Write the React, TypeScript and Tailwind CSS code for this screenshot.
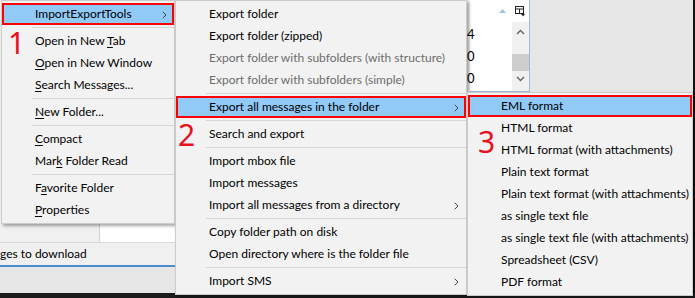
import type { ReactNode } from "react";

type Row = {
  label?: ReactNode;
  sub?: boolean;
  disabled?: boolean;
  sep?: boolean;
  hl?: boolean;
};

const Chevron = () => (
  <svg width="5" height="8" viewBox="0 0 5 8" className="absolute right-[7px] top-[8px]">
    <path d="M0.8 0.8 L4 4 L0.8 7.2" fill="none" stroke="#444" strokeWidth="1" />
  </svg>
);

const Menu = ({ rows, className, num, numClass }: { rows: Row[]; className: string; num: string; numClass: string }) => (
  <div className={`absolute bg-[#f2f2f2] border border-[#cccccc] py-[2px] shadow-[2px_2px_3px_rgba(0,0,0,0.35)] ${className}`}>
    {rows.map((r, i) =>
      r.sep ? (
        <div key={i} className="h-[5px] flex items-center pl-[30px]">
          <div className="h-px w-full bg-[#d7d7d7]" />
        </div>
      ) : (
        <div
          key={i}
          className={`relative h-[22px] flex items-center pl-[33px] whitespace-nowrap ${r.hl ? "bg-[#91c9f7] outline-2 outline-[#ff0000] -outline-offset-2" : ""} ${r.disabled ? "text-[#6d6d6d]" : "text-black"}`}
        >
          {r.label}
          {r.sub && <Chevron />}
        </div>
      )
    )}
    <div className={`absolute text-[#e8101c] text-[30px] leading-none font-['Noto_Sans',sans-serif] ${numClass}`}>{num}</div>
  </div>
);

const U = ({ children }: { children: ReactNode }) => <span className="underline underline-offset-2">{children}</span>;

export default function App() {
  const menu1: Row[] = [
    { label: "ImportExportTools", sub: true, hl: true },
    { sep: true },
    { label: <span>Open in New <U>T</U>ab</span> },
    { label: <span><U>O</U>pen in New Window</span> },
    { label: <span><U>S</U>earch Messages...</span> },
    { sep: true },
    { label: <span><U>N</U>ew Folder...</span> },
    { sep: true },
    { label: <span><U>C</U>ompact</span> },
    { label: <span>Mar<U>k</U> Folder Read</span> },
    { sep: true },
    { label: <span>F<U>a</U>vorite Folder</span> },
    { label: <span><U>P</U>roperties</span> },
  ];
  const menu2: Row[] = [
    { label: "Export folder" },
    { label: "Export folder (zipped)" },
    { label: "Export folder with subfolders (with structure)", disabled: true },
    { label: "Export folder with subfolders (simple)", disabled: true },
    { sep: true },
    { label: "Export all messages in the folder", sub: true, hl: true },
    { sep: true },
    { label: "Search and export" },
    { sep: true },
    { label: "Import mbox file" },
    { label: "Import messages" },
    { label: "Import all messages from a directory", sub: true },
    { sep: true },
    { label: "Copy folder path on disk" },
    { label: "Open directory where is the folder file" },
    { sep: true },
    { label: "Import SMS", sub: true },
  ];
  const menu3: Row[] = [
    { label: "EML format", hl: true },
    { label: "HTML format" },
    { label: "HTML format (with attachments)" },
    { label: "Plain text format" },
    { label: "Plain text format (with attachments)" },
    { label: "as single text file" },
    { label: "as single text file (with attachments)" },
    { label: "Spreadsheet (CSV)" },
    { label: "PDF format" },
  ];

  return (
    <div className="relative w-[695px] h-[298px] overflow-hidden bg-[#e6e6e6] text-[12px] font-['Lato',sans-serif]">
      {/* app behind the menus */}
      <div className="flex flex-col h-full">
        <div className="flex h-[293px]">
          <div className="w-[470px] flex flex-col">
            <div className="h-[222px] bg-[#f0f0f0]" />
            <div className="h-[21px] flex border-b border-[#d9d9d9]">
              <div className="w-[100px] bg-[#f0f0f0] border-r border-[#c9d3de]" />
              <div className="flex-1 bg-white" />
            </div>
            <div className="h-[22px] bg-[#f0f0f0] flex items-center whitespace-nowrap">ges to download</div>
            <div className="flex-1 bg-[#e6e6e6] border-t-2 border-[#4a8ccc]" />
          </div>
          <div className="w-[60px] h-[92px] bg-white border-r border-b border-[#9fb9d6] flex">
            <div className="flex-1 flex flex-col">
              <div className="h-[22px] flex items-center justify-end pr-[6px]">
                <svg width="7" height="4" viewBox="0 0 7 4"><path d="M0 4 L3.5 0 L7 4 Z" fill="#9cc3e2" /></svg>
              </div>
              <div className="flex flex-col text-[13px] leading-[22px] -ml-[3px] pt-[1px]">
                <span>4</span>
                <span>0</span>
                <span>0</span>
              </div>
            </div>
            <div className="w-[17px] flex flex-col">
              <div className="h-[22px] flex items-center justify-center">
                <svg width="11" height="11" viewBox="0 0 11 11">
                  <rect x="0.5" y="0.5" width="8" height="7" fill="none" stroke="#222" />
                  <path d="M0.5 3 H8.5 M4.5 3 V7.5" stroke="#222" />
                  <path d="M6 8 L10 8 L8 10.5 Z" fill="#222" />
                </svg>
              </div>
              <div className="flex-1 bg-[#f0f0f0] flex flex-col items-center">
                <svg width="9" height="6" viewBox="0 0 9 6" className="mt-[7px]"><path d="M1 5 L4.5 1.5 L8 5" fill="none" stroke="#606060" strokeWidth="1.3" /></svg>
                <div className="mt-[19px] w-full h-[17px] bg-[#cdcdcd]" />
                <svg width="9" height="6" viewBox="0 0 9 6" className="mt-[5px]"><path d="M1 1 L4.5 4.5 L8 1" fill="none" stroke="#606060" strokeWidth="1.3" /></svg>
              </div>
            </div>
          </div>
          <div className="flex-1 bg-[#e6e6e6]" />
          <div className="w-[2px] bg-[#111111]" />
        </div>
        <div className="flex-1 bg-[#1b1b1b]" />
      </div>

      <Menu rows={menu1} className="left-[1px] top-0 w-[174px]" num="1" numClass="left-[6px] top-[27px]" />
      <Menu rows={menu2} className="left-[175px] top-0 w-[292px]" num="2" numClass="left-[2px] top-[119px]" />
      <Menu rows={menu3} className="left-[467px] top-[92px] w-[226px]" num="3" numClass="left-[10px] top-[34px]" />
    </div>
  );
}
